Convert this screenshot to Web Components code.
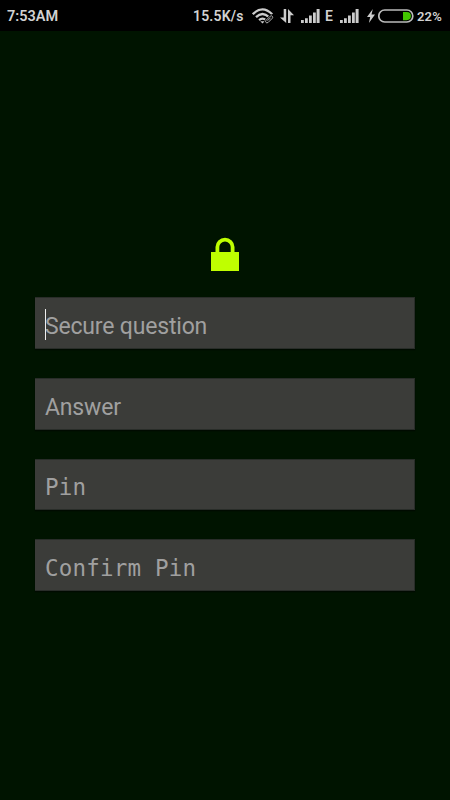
<!DOCTYPE html>
<html lang="en"><head><meta charset="utf-8"><title>Secure question</title>
<style>html,body{margin:0;height:100%;background:#001400}body{overflow:hidden}</style></head>
<body><lock-screen></lock-screen>
<script>
const define=(name,html)=>customElements.define(name,class extends HTMLElement{
  constructor(){super();const t=document.createElement('template');t.innerHTML=html;
    this.attachShadow({mode:'open'}).append(t.content.cloneNode(true));}
});
define('signal-bars',`<style>:host{display:flex;width:19px;height:14px}</style>
<svg width="19" height="14" fill="#ccc"><path d="M0 11h2.8v3H0zM4 9.3h2.8V14H4zM8 6.5h2.8V14H8zM12 3.6h2.8V14H12zM15.6 0h3v14h-3z"/></svg>`);
define('status-bar',`<style>
:host{display:flex;height:31px;box-sizing:border-box;padding:1px 8px 0 7px;background:#000;color:#d2d2d2;font:600 14px/31px Roboto,sans-serif;align-items:center;white-space:nowrap}
span{display:block}svg{display:block;flex:none}
.time{width:186px;font-size:14.5px}.rate{width:59px;letter-spacing:.2px}.wifi{width:28px}.arrows{width:21px}
.net{width:14px;margin-left:5px;margin-right:1px}.bolt{margin-left:8px}.battery{margin-left:3px}.percent{margin-left:3px;font-size:13px;letter-spacing:.2px}
</style>
<span class="time">7:53AM</span><span class="rate">15.5K/s</span>
<svg class="wifi" width="28" height="18" viewBox="0 0 28 18" fill="none" stroke="#ccc" stroke-width="2.3"><path d="M.8 7.2Q10.5-2.6 20.2 7.2M4 10.2q6.5-6.3 13 0M7.1 13.1q3.4-3 6.8 0"/><path d="M8.3 14.2h4.4l-2.2 2.4z" fill="#ccc" stroke="none"/><path d="m14 13.4 4.2-4.2q1.5-1 2.2.2t-.2 2l-4 4q-1.6 1-2.3-.1t.1-1.9z" fill="#000" stroke="#000" stroke-width="2.4"/><path d="m14 13.4 4.2-4.2q1.5-1 2.2.2t-.2 2l-4 4q-1.6 1-2.3-.1t.1-1.9zM15.6 13.7l3-3" stroke="#b5b5b5" stroke-width="1"/></svg>
<svg class="arrows" width="21" height="16" viewBox="0 0 21 16" fill="#ccc"><path d="M3.7 1h2.5v14L0 9.4h3.7zM8 15V1l6 6.2h-3.5V15z"/></svg>
<signal-bars></signal-bars><span class="net">E</span><signal-bars></signal-bars>
<svg class="bolt" width="8" height="14" viewBox="0 0 8 14" fill="#ccc"><path d="M5.8 0 0 8h3.2L1.9 14 8 5.4H4.5z"/></svg>
<svg class="battery" width="36" height="14" viewBox="0 0 36 14"><rect x=".8" y="1" width="34" height="12" rx="5.9" fill="none" stroke="#bbb" stroke-width="1.7"/><path d="M25 3h3.8a4.1 4.1 0 0 1 0 8.2H25z" fill="#43c600"/></svg><span class="percent">22%</span>`);
define('lock-icon',`<style>:host{display:block;width:28px;height:34px}svg{display:block}</style>
<svg width="28" height="34"><path d="M6.4 15.5V10a7.6 7.3 0 0 1 15.2 0v5.5" fill="none" stroke="#bfff00" stroke-width="3.8"/><path d="M0 15h28v19H0z" fill="#bfff00"/></svg>`);
define('text-field',`<style>
:host{display:flex;position:relative;box-sizing:border-box;height:51.6px;padding:7.6px 10px 0;background:#3b3c39;border:1px solid #292d29;border-width:1px 1px 1px 0;box-shadow:0 1px 1px #000b00;align-items:center;color:#a0a0a0;font:23px/30px Roboto,sans-serif;letter-spacing:-.18px;white-space:pre}
:host([mono]){font-family:"DejaVu Sans Mono",monospace;font-size:22.5px;letter-spacing:.2px;padding-top:5.8px}
i{display:none;position:absolute;left:10px;top:11px;width:1px;height:31px;background:#eee}
:host([focused]) i{display:block}</style><slot></slot><i></i>`);
define('lock-screen',`<style>
:host{display:flex;flex-direction:column;height:800px;background:#001400}
main{display:flex;flex-direction:column;align-items:center;padding:206px 35px 0}
form{display:flex;flex-direction:column;gap:29px;width:380px;padding-top:26.4px}
</style><status-bar></status-bar><main><lock-icon></lock-icon><form><text-field focused>Secure question</text-field><text-field>Answer</text-field><text-field mono>Pin</text-field><text-field mono>Confirm Pin</text-field></form></main>`);
</script></body></html>
